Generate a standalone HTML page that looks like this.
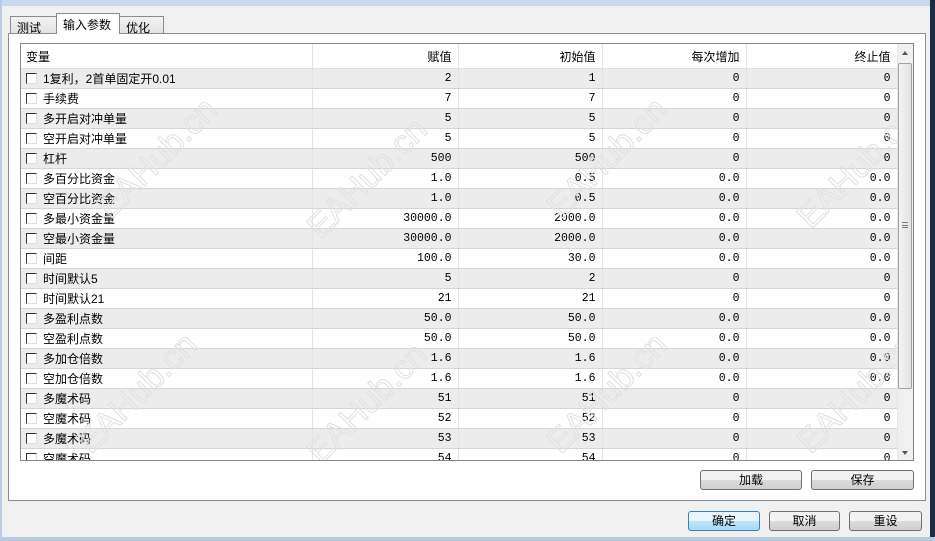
<!DOCTYPE html><html><head><meta charset="utf-8"><style>
*{margin:0;padding:0;box-sizing:border-box}
body{width:935px;height:541px;overflow:hidden;background:#f0f0f0;font-family:"Liberation Sans","Noto Sans CJK SC",sans-serif;font-size:12px;color:#000;position:relative}
.abs{position:absolute}
.tab{position:absolute;border:1px solid #898c95;border-bottom:none;background:linear-gradient(#f2f2f2,#e3e3e3);height:19px;top:14px;padding:2px 0 0 6px}
table{border-collapse:collapse;table-layout:fixed;position:absolute;left:21px;top:44px;width:876px}
td{height:20px;border-bottom:1px solid #d5d5d5;border-right:1px solid #e3e3e3;padding:0 6px;text-align:right;white-space:nowrap;overflow:hidden;font-family:"Liberation Mono","Noto Sans CJK SC",monospace;font-size:11.5px}
td:first-child{text-align:left;padding-left:5px;font-family:"Liberation Sans","Noto Sans CJK SC",sans-serif;font-size:12px}
tr.h td{height:24px;font-family:"Liberation Sans","Noto Sans CJK SC",sans-serif;font-size:12px;border-bottom:1px solid #e0e0e0;padding-top:2px}
tr.g td{background:#ececec}
.cb{display:inline-block;width:11px;height:11px;border:1px solid #333;border-right-color:#ddd;border-bottom-color:#ddd;vertical-align:-1px;margin-right:6px;background:#fff}
.btn{position:absolute;height:20px;border:1px solid #707070;border-radius:3px;background:linear-gradient(#f2f2f2 50%,#dcdcdc 50%,#cfcfcf);text-align:center;line-height:18px;font-size:12px}
.wm{position:absolute;font-size:34px;color:transparent;-webkit-text-stroke:1px #e0e0e0;transform:rotate(-45deg);font-family:"Liberation Sans",sans-serif;white-space:nowrap}
</style></head><body>
<div class="abs" style="left:0;top:0;width:935px;height:6px;background:#c9d9ec"></div>
<div class="abs" style="left:930px;top:0;width:5px;height:541px;background:#1c2c44"></div>
<div class="abs" style="left:0;top:0;width:2px;height:541px;background:#b9cbe2"></div>
<div class="abs" style="left:0;top:537px;width:935px;height:4px;background:#b9cbe2"></div>
<div class="abs" style="left:8px;top:33px;width:918px;height:468px;background:#fff;border:1px solid #898c95"></div>
<div class="tab" style="left:10px;width:47px;top:16px;height:17px">测试</div>
<div class="tab" style="left:119px;width:45px;top:16px;height:17px">优化</div>
<div class="tab" style="left:56px;width:64px;top:13px;height:21px;background:#fff">输入参数</div>
<div class="abs" style="left:20px;top:43px;width:894px;height:418px;border:1px solid #828790;background:#fff;overflow:hidden">
</div>
<div class="abs" style="left:21px;top:44px;width:876px;height:416px;overflow:hidden">
<table style="left:0;top:0">
<colgroup><col style="width:291px"><col style="width:146px"><col style="width:144px"><col style="width:144px"><col style="width:151px"></colgroup>
<tr class="h"><td>变量</td><td>赋值</td><td>初始值</td><td>每次增加</td><td>终止值</td></tr>
<tr class="g"><td><span class="cb"></span>1复利，2首单固定开0.01</td><td>2</td><td>1</td><td>0</td><td>0</td></tr>
<tr><td><span class="cb"></span>手续费</td><td>7</td><td>7</td><td>0</td><td>0</td></tr>
<tr class="g"><td><span class="cb"></span>多开启对冲单量</td><td>5</td><td>5</td><td>0</td><td>0</td></tr>
<tr><td><span class="cb"></span>空开启对冲单量</td><td>5</td><td>5</td><td>0</td><td>0</td></tr>
<tr class="g"><td><span class="cb"></span>杠杆</td><td>500</td><td>500</td><td>0</td><td>0</td></tr>
<tr><td><span class="cb"></span>多百分比资金</td><td>1.0</td><td>0.5</td><td>0.0</td><td>0.0</td></tr>
<tr class="g"><td><span class="cb"></span>空百分比资金</td><td>1.0</td><td>0.5</td><td>0.0</td><td>0.0</td></tr>
<tr><td><span class="cb"></span>多最小资金量</td><td>30000.0</td><td>2000.0</td><td>0.0</td><td>0.0</td></tr>
<tr class="g"><td><span class="cb"></span>空最小资金量</td><td>30000.0</td><td>2000.0</td><td>0.0</td><td>0.0</td></tr>
<tr><td><span class="cb"></span>间距</td><td>100.0</td><td>30.0</td><td>0.0</td><td>0.0</td></tr>
<tr class="g"><td><span class="cb"></span>时间默认5</td><td>5</td><td>2</td><td>0</td><td>0</td></tr>
<tr><td><span class="cb"></span>时间默认21</td><td>21</td><td>21</td><td>0</td><td>0</td></tr>
<tr class="g"><td><span class="cb"></span>多盈利点数</td><td>50.0</td><td>50.0</td><td>0.0</td><td>0.0</td></tr>
<tr><td><span class="cb"></span>空盈利点数</td><td>50.0</td><td>50.0</td><td>0.0</td><td>0.0</td></tr>
<tr class="g"><td><span class="cb"></span>多加仓倍数</td><td>1.6</td><td>1.6</td><td>0.0</td><td>0.0</td></tr>
<tr><td><span class="cb"></span>空加仓倍数</td><td>1.6</td><td>1.6</td><td>0.0</td><td>0.0</td></tr>
<tr class="g"><td><span class="cb"></span>多魔术码</td><td>51</td><td>51</td><td>0</td><td>0</td></tr>
<tr><td><span class="cb"></span>空魔术码</td><td>52</td><td>52</td><td>0</td><td>0</td></tr>
<tr class="g"><td><span class="cb"></span>多魔术码</td><td>53</td><td>53</td><td>0</td><td>0</td></tr>
<tr><td><span class="cb"></span>空魔术码</td><td>54</td><td>54</td><td>0</td><td>0</td></tr>
</table>
<div class="wm" style="left:60px;top:95px">EAHub.cn</div>
<div class="wm" style="left:270px;top:115px">EAHub.cn</div>
<div class="wm" style="left:510px;top:95px">EAHub.cn</div>
<div class="wm" style="left:760px;top:105px">EAHub.cn</div>
<div class="wm" style="left:40px;top:330px">EAHub.cn</div>
<div class="wm" style="left:270px;top:340px">EAHub.cn</div>
<div class="wm" style="left:510px;top:330px">EAHub.cn</div>
<div class="wm" style="left:760px;top:330px">EAHub.cn</div>
</div>
<div class="abs" style="left:897px;top:44px;width:16px;height:416px;background:#f0f0f0;border-left:1px solid #e6e6e6"></div>
<div class="abs" style="left:902px;top:51px;width:0;height:0;border:3px solid transparent;border-bottom:4px solid #555;border-top:none"></div>
<div class="abs" style="left:902px;top:451px;width:0;height:0;border:3px solid transparent;border-top:4px solid #555;border-bottom:none"></div>
<div class="abs" style="left:898px;top:63px;width:14px;height:326px;border:1px solid #a0a0a0;border-radius:2px;background:linear-gradient(90deg,#f4f4f4,#e2e2e2)"></div>
<div class="abs" style="left:902px;top:222px;width:6px;height:6px;border-top:1px solid #777;border-bottom:1px solid #777"><div style="margin-top:2px;border-top:1px solid #777"></div></div>
<div class="btn" style="left:700px;top:470px;width:102px">加载</div>
<div class="btn" style="left:811px;top:470px;width:103px">保存</div>
<div class="btn" style="left:688px;top:511px;width:72px;border-color:#3c7fb1;background:linear-gradient(#eaf6fd 50%,#bee6fd 50%,#a7d9f5)">确定</div>
<div class="btn" style="left:769px;top:511px;width:71px">取消</div>
<div class="btn" style="left:849px;top:511px;width:73px">重设</div>
</body></html>
